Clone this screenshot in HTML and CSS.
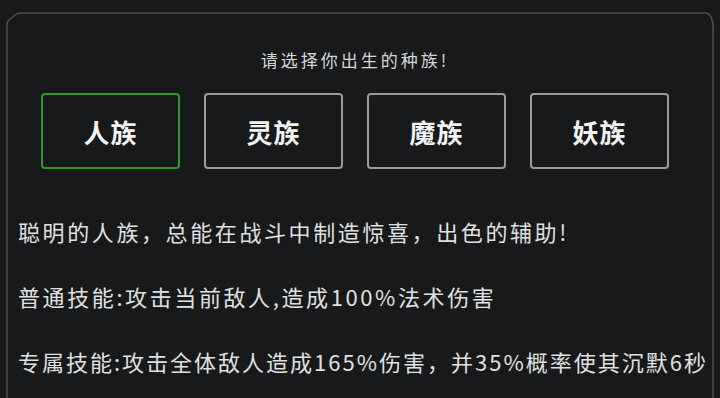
FILE: index.html
```html
<!DOCTYPE html>
<html lang="zh-CN">
<head>
    <meta charset="UTF-8">
    <title>选择种族</title>
    <link rel="stylesheet" href="styles.css">
</head>
<body>
    <div class="frame">
        <!-- 外框线，上两角切角 -->
        <svg class="frame-line" width="708" height="386" viewBox="0 0 708 386">
            <path d="M1 386 L1 13 Q1 10 3 8 L9 3 Q11 1 14 1 L699 1 Q703 1 705 5 Q707 9 707 16 L707 386" fill="none" stroke="#4b4e50" stroke-width="1.6"/>
        </svg>

        <div class="title">请选择你出生的种族!</div>

        <div class="races">
            <div class="race selected">人族</div>
            <div class="race">灵族</div>
            <div class="race">魔族</div>
            <div class="race">妖族</div>
        </div>

        <div class="desc">
            <p>聪明的人族，总能在战斗中制造惊喜，出色的辅助!</p>
            <p>普通技能:攻击当前敌人,造成100%法术伤害</p>
            <p class="tight">专属技能:攻击全体敌人造成165%伤害，并35%概率使其沉默6秒</p>
        </div>
    </div>
</body>
</html>
```

FILE: styles.css
```css
body {
    margin: 0;
    background: #17191b;
    color: #e0e0e0;
    font-family: "Noto Sans CJK SC", "Noto Sans", sans-serif;
    overflow: hidden;
}
.frame {
    position: relative;
    width: 708px;
    height: 386px;
    margin: 12px 0 0 6px;
}
.frame-line {
    position: absolute;
    left: 0;
    top: 0;
}
.title {
    width: 628px;
    margin-left: 35px;
    padding-top: 36px;
    font-size: 17px;
    line-height: 24px;
    letter-spacing: 3px;
    text-align: center;
    color: #d6d6d6;
}
.races {
    display: flex;
    gap: 24px;
    margin: 21px 0 0 35px;
}
.race {
    width: 135px;
    height: 72px;
    border: 2px solid #9a9b9c;
    border-radius: 4px;
    display: flex;
    justify-content: center;
    align-items: center;
    font-size: 26px;
    font-weight: bold;
    letter-spacing: 1px;
    color: #f2f2f2;
}
.race.selected {
    border-color: #2c9a2c;
}
.desc {
    margin-top: 30px;
    padding-left: 12px;
}
.desc p {
    margin: 0;
    font-size: 22px;
    line-height: 65px;
    letter-spacing: 2.6px;
    white-space: nowrap;
}
.desc p.tight {
    letter-spacing: 2px;
}
```
